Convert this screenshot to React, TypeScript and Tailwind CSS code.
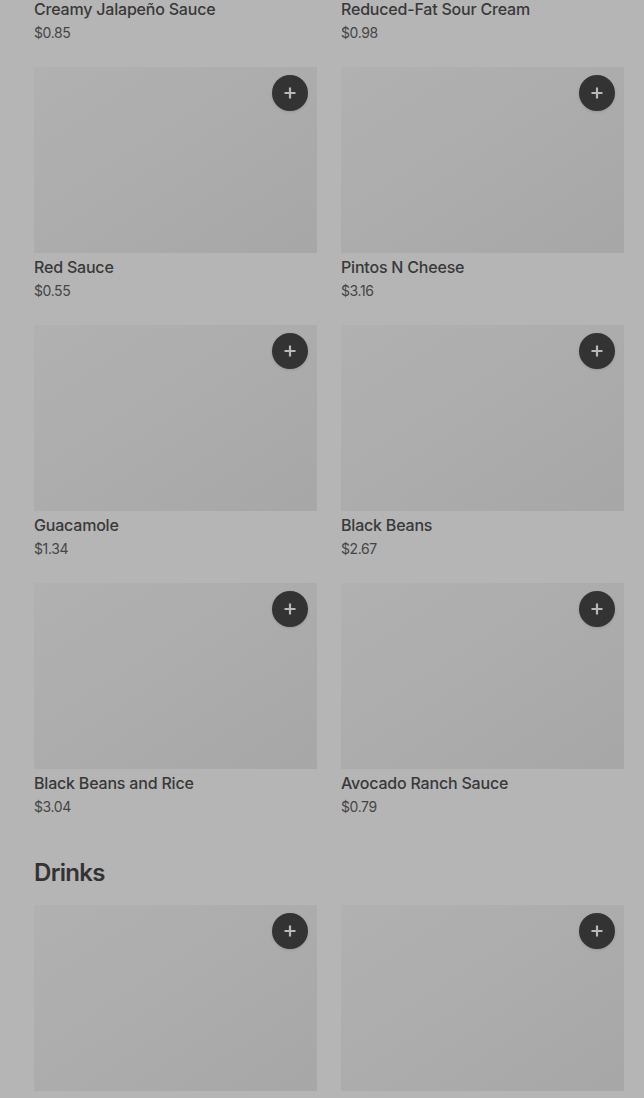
import React from "react";

type Item = { name: string; price: string };

const sides: Item[] = [
  { name: "Creamy Jalapeño Sauce", price: "$0.85" },
  { name: "Reduced-Fat Sour Cream", price: "$0.98" },
  { name: "Red Sauce", price: "$0.55" },
  { name: "Pintos N Cheese", price: "$3.16" },
  { name: "Guacamole", price: "$1.34" },
  { name: "Black Beans", price: "$2.67" },
  { name: "Black Beans and Rice", price: "$3.04" },
  { name: "Avocado Ranch Sauce", price: "$0.79" },
];

const drinks: Item[] = [
  { name: "Pepsi", price: "$2.49" },
  { name: "Mountain Dew Baja Blast", price: "$2.49" },
];

const ItemCard = ({ item }: { item: Item }) => (
  <div className="flex flex-col">
    <div className="relative h-[186px] w-full bg-gradient-to-br from-[#b1b1b1] to-[#a7a7a7]">
      <button className="absolute right-[9px] top-[8px] flex h-9 w-9 items-center justify-center rounded-full bg-[#333333] shadow-sm">
        <svg width="14" height="14" viewBox="0 0 14 14" fill="none">
          <path d="M7 1.5v11M1.5 7h11" stroke="#b8b8b8" strokeWidth="2.2" />
        </svg>
      </button>
    </div>
    <div className="mt-[2px] text-[16px] font-medium leading-6 tracking-[-0.2px] text-[#393939]">
      {item.name}
    </div>
    <div className="mt-[2px] text-[14px] leading-5 tracking-[-0.4px] text-[#454545]">
      {item.price}
    </div>
  </div>
);

export default function App() {
  return (
    <div
      className="h-[1098px] overflow-hidden bg-[#b5b5b5] pl-[34px] pr-[20px]"
      style={{ fontFamily: "Inter, 'Noto Sans', sans-serif" }}
    >
      <div className="-mt-[191px] grid grid-cols-2 gap-x-6 gap-y-6">
        {sides.map((item) => (
          <ItemCard key={item.name} item={item} />
        ))}
      </div>
      <h2 className="mt-10 text-[24px] font-semibold leading-8 tracking-[-0.7px] text-[#333333]">
        Drinks
      </h2>
      <div className="mt-4 grid grid-cols-2 gap-x-6 gap-y-6">
        {drinks.map((item) => (
          <ItemCard key={item.name} item={item} />
        ))}
      </div>
    </div>
  );
}
